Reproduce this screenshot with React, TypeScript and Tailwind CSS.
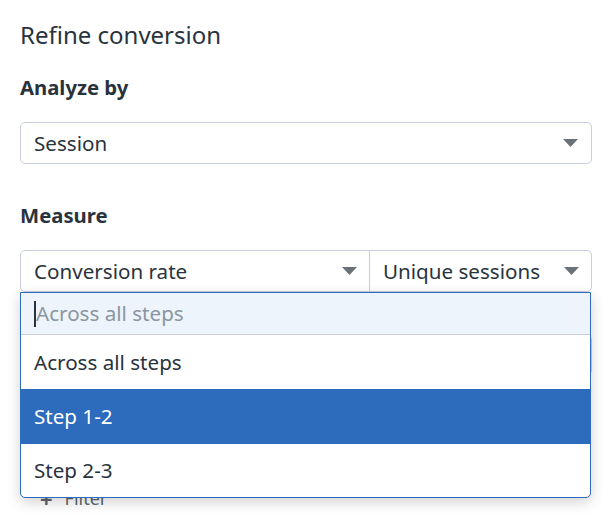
const Caret = () => (
  <svg width="15" height="8" viewBox="0 0 15 8" className="shrink-0">
    <path d="M0 0 L15 0 L7.5 8 Z" fill="#6b7178" />
  </svg>
);

export default function App() {
  return (
    <div
      className="relative min-h-[522px] bg-white px-5 pt-5 text-[#29333d]"
      style={{ fontFamily: '"Noto Sans", "Open Sans", sans-serif' }}
    >
      <h1 className="text-[24px] leading-[30px]">Refine conversion</h1>

      <h2 className="mt-6 text-[20.3px] font-bold leading-[26px]">Analyze by</h2>
      <div className="mt-[22px] flex h-[42px] w-[572px] items-center justify-between rounded-[5px] border border-[#c8cddf] pl-[13px] pr-[13px] text-[20.6px]">
        <span>Session</span>
        <Caret />
      </div>

      <h2 className="mt-[38px] text-[20.3px] font-bold leading-[26px]">Measure</h2>
      <div className="mt-[22px] flex h-[42px] w-[572px] rounded-[5px] border border-[#c8cddf] text-[20.6px]">
        <div className="flex w-[349px] items-center justify-between border-r border-[#c8cddf] pl-[13px] pr-[12px]">
          <span>Conversion rate</span>
          <Caret />
        </div>
        <div className="flex flex-1 items-center justify-between pl-[13px] pr-[12px]">
          <span>Unique sessions</span>
          <Caret />
        </div>
      </div>

      {/* select hidden under the open menu */}
      <div className="mt-[43px] h-[40px] w-[572px] rounded-[5px] border border-[#c8cddf]" />

      <button className="mt-[111px] flex items-center gap-3 pl-5 text-[18px] leading-6 text-[#5d6771]">
        <span className="text-[22px] font-bold">+</span>
        <span>Filter</span>
      </button>

      <div className="absolute left-5 top-[292px] w-[571px] overflow-hidden rounded-b-[5px] border border-[#2d6bbd] bg-white text-[20.6px] shadow-[0_4px_14px_rgba(0,0,0,0.18)]">
        <div className="flex h-[42px] items-center border-b border-[#c8cddf] bg-[#edf4fb] pl-[13px]">
          <span className="h-[26px] w-[2px] bg-[#29333d]" />
          <span className="text-[#8b96a0]">Across all steps</span>
        </div>
        <div className="flex h-[54px] items-center pl-[13px]">Across all steps</div>
        <div className="flex h-[55px] items-center bg-[#2d6bbd] pl-[13px] text-white">Step 1-2</div>
        <div className="flex h-[53px] items-center pl-[13px]">Step 2-3</div>
      </div>
    </div>
  );
}
